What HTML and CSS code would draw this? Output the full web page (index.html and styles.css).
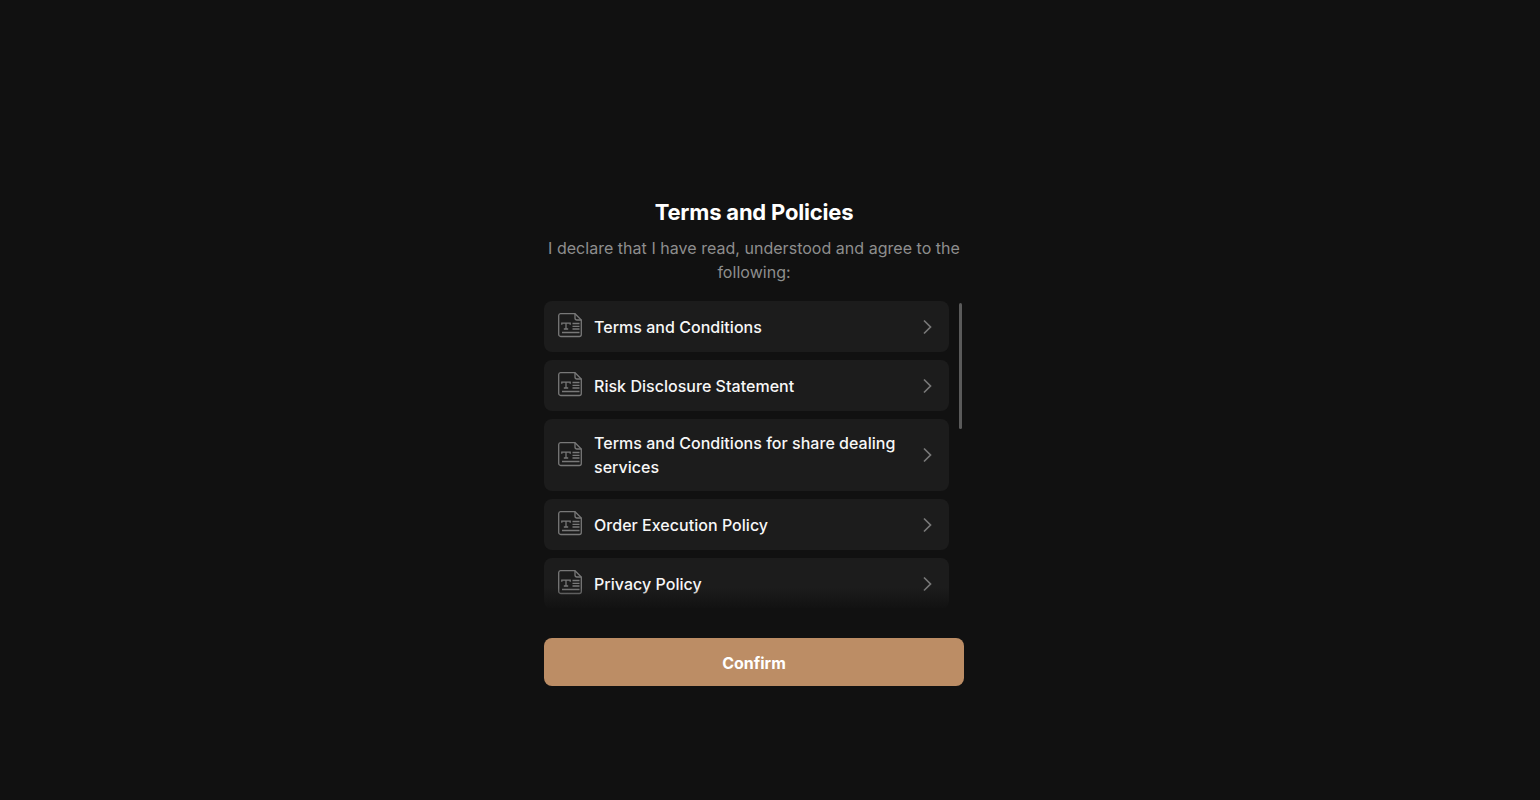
FILE: index.html
```html
<!DOCTYPE html>
<html lang="en">
<head>
<meta charset="utf-8">
<title>Terms and Policies</title>
<link rel="stylesheet" href="styles.css">
</head>
<body>
<main class="page">
  <section class="panel">
    <h1 class="title">Terms and Policies</h1>
    <p class="subtitle">I declare that I have read, understood and agree to the following:</p>
    <div class="list-wrap">
      <ul class="list">
        <li class="row">
          <svg class="doc" viewBox="0 0 24 27" fill="none"><path d="M2.500 .7H17L23.300 7V21.500a2 2 0 0 1-2 2H2.700a2 2 0 0 1-2-2V2.500a2 2 0 0 1 1.800-1.800Z"/><path d="M17 .7V5a2 2 0 0 0 2 2H23.300"/><path class="thin" d="M3.800 11.800V10.200H12.200V11.800M8 10.200V16M5.800 16H10.200M14.500 10.500H21.500M14.500 13.300H21.500M14.500 16H21.500M4 19.500H21.500"/></svg>
          <span class="label">Terms and Conditions</span>
          <svg class="chev" viewBox="0 0 10 16" fill="none"><path d="M2 1.500L8.500 8L2 14.500"/></svg>
        </li>
        <li class="row">
          <svg class="doc" viewBox="0 0 24 27" fill="none"><path d="M2.500 .7H17L23.300 7V21.500a2 2 0 0 1-2 2H2.700a2 2 0 0 1-2-2V2.500a2 2 0 0 1 1.800-1.800Z"/><path d="M17 .7V5a2 2 0 0 0 2 2H23.300"/><path class="thin" d="M3.800 11.800V10.200H12.200V11.800M8 10.200V16M5.800 16H10.200M14.500 10.500H21.500M14.500 13.300H21.500M14.500 16H21.500M4 19.500H21.500"/></svg>
          <span class="label">Risk Disclosure Statement</span>
          <svg class="chev" viewBox="0 0 10 16" fill="none"><path d="M2 1.500L8.500 8L2 14.500"/></svg>
        </li>
        <li class="row">
          <svg class="doc" viewBox="0 0 24 27" fill="none"><path d="M2.500 .7H17L23.300 7V21.500a2 2 0 0 1-2 2H2.700a2 2 0 0 1-2-2V2.500a2 2 0 0 1 1.800-1.800Z"/><path d="M17 .7V5a2 2 0 0 0 2 2H23.300"/><path class="thin" d="M3.800 11.800V10.200H12.200V11.800M8 10.200V16M5.800 16H10.200M14.500 10.500H21.500M14.500 13.300H21.500M14.500 16H21.500M4 19.500H21.500"/></svg>
          <span class="label">Terms and Conditions for share dealing services</span>
          <svg class="chev" viewBox="0 0 10 16" fill="none"><path d="M2 1.500L8.500 8L2 14.500"/></svg>
        </li>
        <li class="row">
          <svg class="doc" viewBox="0 0 24 27" fill="none"><path d="M2.500 .7H17L23.300 7V21.500a2 2 0 0 1-2 2H2.700a2 2 0 0 1-2-2V2.500a2 2 0 0 1 1.800-1.800Z"/><path d="M17 .7V5a2 2 0 0 0 2 2H23.300"/><path class="thin" d="M3.800 11.800V10.200H12.200V11.800M8 10.200V16M5.800 16H10.200M14.500 10.500H21.500M14.500 13.300H21.500M14.500 16H21.500M4 19.500H21.500"/></svg>
          <span class="label">Order Execution Policy</span>
          <svg class="chev" viewBox="0 0 10 16" fill="none"><path d="M2 1.500L8.500 8L2 14.500"/></svg>
        </li>
        <li class="row">
          <svg class="doc" viewBox="0 0 24 27" fill="none"><path d="M2.500 .7H17L23.300 7V21.500a2 2 0 0 1-2 2H2.700a2 2 0 0 1-2-2V2.500a2 2 0 0 1 1.800-1.800Z"/><path d="M17 .7V5a2 2 0 0 0 2 2H23.300"/><path class="thin" d="M3.800 11.800V10.200H12.200V11.800M8 10.200V16M5.800 16H10.200M14.500 10.500H21.500M14.500 13.300H21.500M14.500 16H21.500M4 19.500H21.500"/></svg>
          <span class="label">Privacy Policy</span>
          <svg class="chev" viewBox="0 0 10 16" fill="none"><path d="M2 1.500L8.500 8L2 14.500"/></svg>
        </li>
      </ul>
      <div class="thumb"></div>
      <div class="fade"></div>
    </div>
    <button class="confirm" type="button">Confirm</button>
  </section>
</main>
</body>
</html>
```
FILE: styles.css
```css
* { box-sizing: border-box; }
html, body { margin: 0; height: 100%; }
body {
  background: #111111;
  font-family: Inter, "Liberation Sans", sans-serif;
  color: #fff;
  overflow: hidden;
}
.page {
  height: 800px;
  padding-top: 197px;
  padding-right: 32px;
  display: flex;
  justify-content: center;
  align-items: flex-start;
}
.panel {
  width: 420px;
  display: flex;
  flex-direction: column;
}
.title {
  margin: 0;
  font-size: 22px;
  line-height: 30px;
  font-weight: 700;
  letter-spacing: -0.2px;
  text-align: center;
  color: #fff;
}
.subtitle {
  margin: 9px 0 0;
  font-size: 16px;
  line-height: 24px;
  letter-spacing: 0.03px;
  text-align: center;
  color: #8e8e8e;
}
.list-wrap {
  position: relative;
  margin-top: 17px;
  height: 307px;
  overflow: hidden;
}
.list {
  list-style: none;
  margin: 0;
  padding: 0;
  width: 405px;
  display: flex;
  flex-direction: column;
  gap: 8px;
}
.row {
  display: flex;
  align-items: center;
  gap: 12px;
  padding: 12px 14px;
  background: #1c1c1c;
  border-radius: 8px;
}
.doc {
  flex: none;
  width: 24px;
  height: 27px;
}
.doc path {
  stroke: #787878;
  stroke-width: 1.3;
}
.doc .thin {
  stroke-width: 1.3;
}
.label {
  flex: 1;
  font-size: 16px;
  line-height: 24px;
  font-weight: 500;
  letter-spacing: 0.03px;
  color: #f7f7f7;
}
.chev {
  flex: none;
  width: 10px;
  height: 16px;
  margin-right: 3px;
  margin-left: 12px;
}
.chev path {
  stroke: #787878;
  stroke-width: 1.7;
}
.thumb {
  position: absolute;
  top: 2px;
  left: 415px;
  width: 3px;
  height: 126px;
  background: #5a5a5a;
  border-radius: 2px;
}
.fade {
  position: absolute;
  left: 0;
  right: 0;
  bottom: 0;
  height: 20px;
  background: linear-gradient(to bottom, rgba(17, 17, 17, 0), rgba(17, 17, 17, 0.9));
}
.confirm {
  margin-top: 30px;
  height: 48px;
  padding: 2px 0 0;
  border: 0;
  border-radius: 8px;
  background: #bc8d65;
  color: #fff;
  font-family: inherit;
  font-size: 16px;
  font-weight: 700;
}
```
